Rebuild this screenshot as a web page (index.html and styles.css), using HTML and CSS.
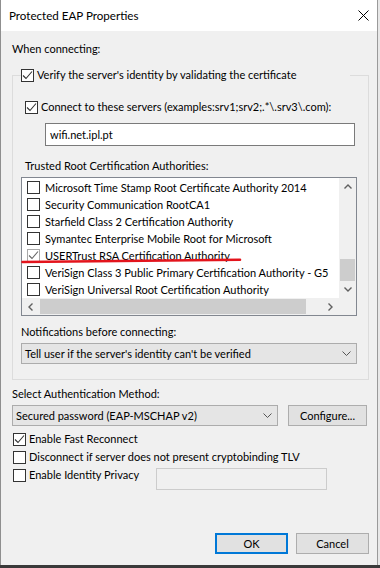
FILE: index.html
```html
<!DOCTYPE html>
<html lang="en">
<head>
    <meta charset="UTF-8">
    <meta name="viewport" content="width=device-width, initial-scale=1.0">
    <title>Protected EAP Properties</title>
    <link rel="stylesheet" href="styles.css">
</head>
<body>

    <div class="window">
        <div class="title-bar">
            <span class="title">Protected EAP Properties</span>
            <svg class="close-icon" width="11" height="11" viewBox="0 0 11 11">
                <path d="M0.5 0.5 L10.5 10.5 M10.5 0.5 L0.5 10.5" stroke="#000" stroke-width="1" fill="none"/>
            </svg>
        </div>

        <div class="dialog-body">
            <div class="label">When connecting:</div>

            <fieldset class="group">
                <legend class="group-legend">
                    <div class="check-row">
                        <span class="checkbox"><svg width="11" height="11" viewBox="0 0 11 11"><path d="M1 5.5 L4 8.5 L10 1.5" stroke="#333" stroke-width="1.1" fill="none"/></svg></span>
                        Verify the server's identity by validating the certificate
                    </div>
                </legend>

                <div class="check-row connect-row">
                    <span class="checkbox"><svg width="11" height="11" viewBox="0 0 11 11"><path d="M1 5.5 L4 8.5 L10 1.5" stroke="#333" stroke-width="1.1" fill="none"/></svg></span>
                    Connect to these servers (examples:srv1;srv2;.*\.srv3\.com):
                </div>

                <div class="text-input">wifi.net.ipl.pt</div>

                <div class="label trusted-label">Trusted Root Certification Authorities:</div>

                <div class="listbox">
                    <div class="list-main">
                        <div class="list-rows">
                            <div class="list-row"><span class="checkbox"></span>Microsoft Time Stamp Root Certificate Authority 2014</div>
                            <div class="list-row"><span class="checkbox"></span>Security Communication RootCA1</div>
                            <div class="list-row"><span class="checkbox"></span>Starfield Class 2 Certification Authority</div>
                            <div class="list-row"><span class="checkbox"></span>Symantec Enterprise Mobile Root for Microsoft</div>
                            <div class="list-row"><span class="checkbox soft"><svg width="11" height="11" viewBox="0 0 11 11"><path d="M1 5.5 L4 8.5 L10 1.5" stroke="#666" stroke-width="1.1" fill="none"/></svg></span>USERTrust RSA Certification Authority</div>
                            <div class="list-row"><span class="checkbox"></span>VeriSign Class 3 Public Primary Certification Authority - G5</div>
                            <div class="list-row"><span class="checkbox"></span>VeriSign Universal Root Certification Authority</div>
                        </div>
                        <div class="vscroll">
                            <div class="scroll-btn">
                                <svg width="8" height="5" viewBox="0 0 8 5"><path d="M0.5 4.5 L4 1 L7.5 4.5" stroke="#606060" stroke-width="1.4" fill="none"/></svg>
                            </div>
                            <div class="vtrack"><div class="vthumb"></div></div>
                            <div class="scroll-btn">
                                <svg width="8" height="5" viewBox="0 0 8 5"><path d="M0.5 0.5 L4 4 L7.5 0.5" stroke="#606060" stroke-width="1.4" fill="none"/></svg>
                            </div>
                        </div>
                    </div>
                    <div class="list-bottom">
                        <div class="hscroll">
                            <div class="scroll-btn">
                                <svg width="5" height="8" viewBox="0 0 5 8"><path d="M4.5 0.5 L1 4 L4.5 7.5" stroke="#606060" stroke-width="1.4" fill="none"/></svg>
                            </div>
                            <div class="htrack"><div class="hthumb"></div></div>
                            <div class="scroll-btn">
                                <svg width="5" height="8" viewBox="0 0 5 8"><path d="M0.5 0.5 L4 4 L0.5 7.5" stroke="#606060" stroke-width="1.4" fill="none"/></svg>
                            </div>
                        </div>
                        <div class="scroll-corner"></div>
                    </div>

                    <!-- hand drawn red underline -->
                    <svg class="red-mark" width="222" height="6" viewBox="0 0 222 6">
                        <path d="M1.5 4 Q 100 3 219 1.8" stroke="#e3141c" stroke-width="2.6" stroke-linecap="round" fill="none"/>
                    </svg>
                </div>

                <div class="label notify-label">Notifications before connecting:</div>
                <div class="select">
                    <span>Tell user if the server's identity can't be verified</span>
                    <svg width="9" height="5" viewBox="0 0 9 5"><path d="M0.5 0.5 L4.5 4.5 L8.5 0.5" stroke="#555" stroke-width="1" fill="none"/></svg>
                </div>
            </fieldset>

            <div class="label auth-label">Select Authentication Method:</div>
            <div class="auth-row">
                <div class="select auth-select">
                    <span>Secured password (EAP-MSCHAP v2)</span>
                    <svg width="9" height="5" viewBox="0 0 9 5"><path d="M0.5 0.5 L4.5 4.5 L8.5 0.5" stroke="#555" stroke-width="1" fill="none"/></svg>
                </div>
                <button class="btn configure-btn">Configure...</button>
            </div>

            <div class="options">
                <div class="check-row">
                    <span class="checkbox"><svg width="11" height="11" viewBox="0 0 11 11"><path d="M1 5.5 L4 8.5 L10 1.5" stroke="#333" stroke-width="1.1" fill="none"/></svg></span>
                    Enable Fast Reconnect
                </div>
                <div class="check-row">
                    <span class="checkbox"></span>
                    Disconnect if server does not present cryptobinding TLV
                </div>
                <div class="privacy-row">
                    <div class="check-row privacy-check">
                        <span class="checkbox"></span>
                        Enable Identity Privacy
                    </div>
                    <div class="disabled-input"></div>
                </div>
            </div>

            <div class="footer">
                <button class="btn btn-default">OK</button>
                <button class="btn">Cancel</button>
            </div>
        </div>
    </div>

</body>
</html>
```

FILE: styles.css
```css
* {
    box-sizing: border-box;
}

body {
    margin: 0;
    width: 380px;
    height: 568px;
    overflow: hidden;
    background: linear-gradient(to bottom, #e8e8e8 565px, #3a3a3a 565px);
    font-family: Lato, "Liberation Sans", Arial, sans-serif;
    font-size: 11px;
    color: #000;
}

.window {
    width: 378px;
    height: 565px;
    background: #f0f0f0;
    border-left: 1px solid #8f8f8f;
    border-right: 1px solid #9a9a9a;
}

.title-bar {
    height: 31px;
    background: #fff;
    display: flex;
    align-items: center;
    justify-content: space-between;
    padding: 0 8px 0 8px;
}

.title {
    font-size: 11.6px;
}

.dialog-body {
    padding: 10px 8px 0 11px;
}

.label {
    line-height: 16px;
    height: 16px;
    white-space: nowrap;
}

/* group box */
.group {
    margin: 10px 0 0;
    padding: 0 11px 15px 8px;
    border: 1px solid #dcdcdc;
    min-width: 0;
}

.group-legend {
    padding: 0;
    width: 329px;
}

.check-row {
    display: flex;
    align-items: center;
    height: 16px;
    line-height: 16px;
    white-space: nowrap;
}

.checkbox {
    width: 13px;
    height: 13px;
    flex: none;
    display: flex;
    align-items: center;
    justify-content: center;
    margin-right: 3px;
    border: 1px solid #333;
    background: #fff;
}

.checkbox.soft {
    border-color: #a8a8a8;
}

.connect-row {
    margin: 16px 0 0 4px;
}

.text-input {
    margin: 8px 0 0 24px;
    width: 310px;
    height: 23px;
    line-height: 21px;
    padding: 0 4px;
    background: #fff;
    border: 1px solid #7a7a7a;
}

.trusted-label {
    margin: 12px 0 0 4px;
}

/* certificate list */
.listbox {
    position: relative;
    margin-top: 3px;
    height: 139px;
    border: 1px solid #828790;
    background: #fff;
}

.list-main {
    display: flex;
    height: 120px;
}

.list-rows {
    flex: 1;
    padding-top: 1px;
    overflow: hidden;
}

.list-row {
    display: flex;
    align-items: center;
    height: 17px;
    padding-left: 5px;
    white-space: nowrap;
}

.list-row .checkbox {
    margin-right: 5px;
}

.vscroll {
    width: 17px;
    display: flex;
    flex-direction: column;
    background: #f0f0f0;
}

.scroll-btn {
    width: 17px;
    height: 17px;
    flex: none;
    display: flex;
    align-items: center;
    justify-content: center;
}

.vtrack {
    flex: 1;
}

.vthumb {
    margin: 64px 0 0 1px;
    width: 15px;
    height: 22px;
    background: #cdcdcd;
}

.list-bottom {
    display: flex;
    height: 17px;
    background: #f0f0f0;
}

.hscroll {
    flex: 1;
    display: flex;
}

.htrack {
    flex: 1;
}

.hthumb {
    margin: 1px 0 0 1px;
    width: 266px;
    height: 15px;
    background: #cdcdcd;
}

.scroll-corner {
    width: 17px;
}

.red-mark {
    position: absolute;
    left: -1px;
    top: 80px;
}

/* dropdowns and buttons */
.notify-label {
    margin-top: 8px;
}

.select {
    margin-top: 3px;
    height: 21px;
    display: flex;
    align-items: center;
    justify-content: space-between;
    padding: 0 5px 0 3px;
    background: #e5e5e5;
    border: 1px solid #acacac;
    white-space: nowrap;
}

.auth-label {
    margin-top: 6px;
}

.auth-row {
    display: flex;
    gap: 10px;
    margin-top: 3px;
}

.auth-select {
    margin-top: 0;
    width: 266px;
}

.btn {
    width: 73px;
    height: 21px;
    padding: 0;
    font-family: inherit;
    font-size: 11px;
    color: #000;
    background: #e1e1e1;
    border: 1px solid #adadad;
}

.configure-btn {
    width: 79px;
}

.btn-default {
    border: 2px solid #0078d7;
}

.options {
    margin-top: 5px;
    display: flex;
    flex-direction: column;
    gap: 2px;
    margin-left: 1px;
}

.privacy-row {
    display: flex;
    align-items: flex-start;
}

.privacy-check {
    width: 143px;
}

.disabled-input {
    margin-top: 1px;
    width: 171px;
    height: 22px;
    background: #f0f0f0;
    border: 1px solid #cccccc;
}

.footer {
    display: flex;
    justify-content: flex-end;
    gap: 8px;
    margin-top: 43px;
}
```
